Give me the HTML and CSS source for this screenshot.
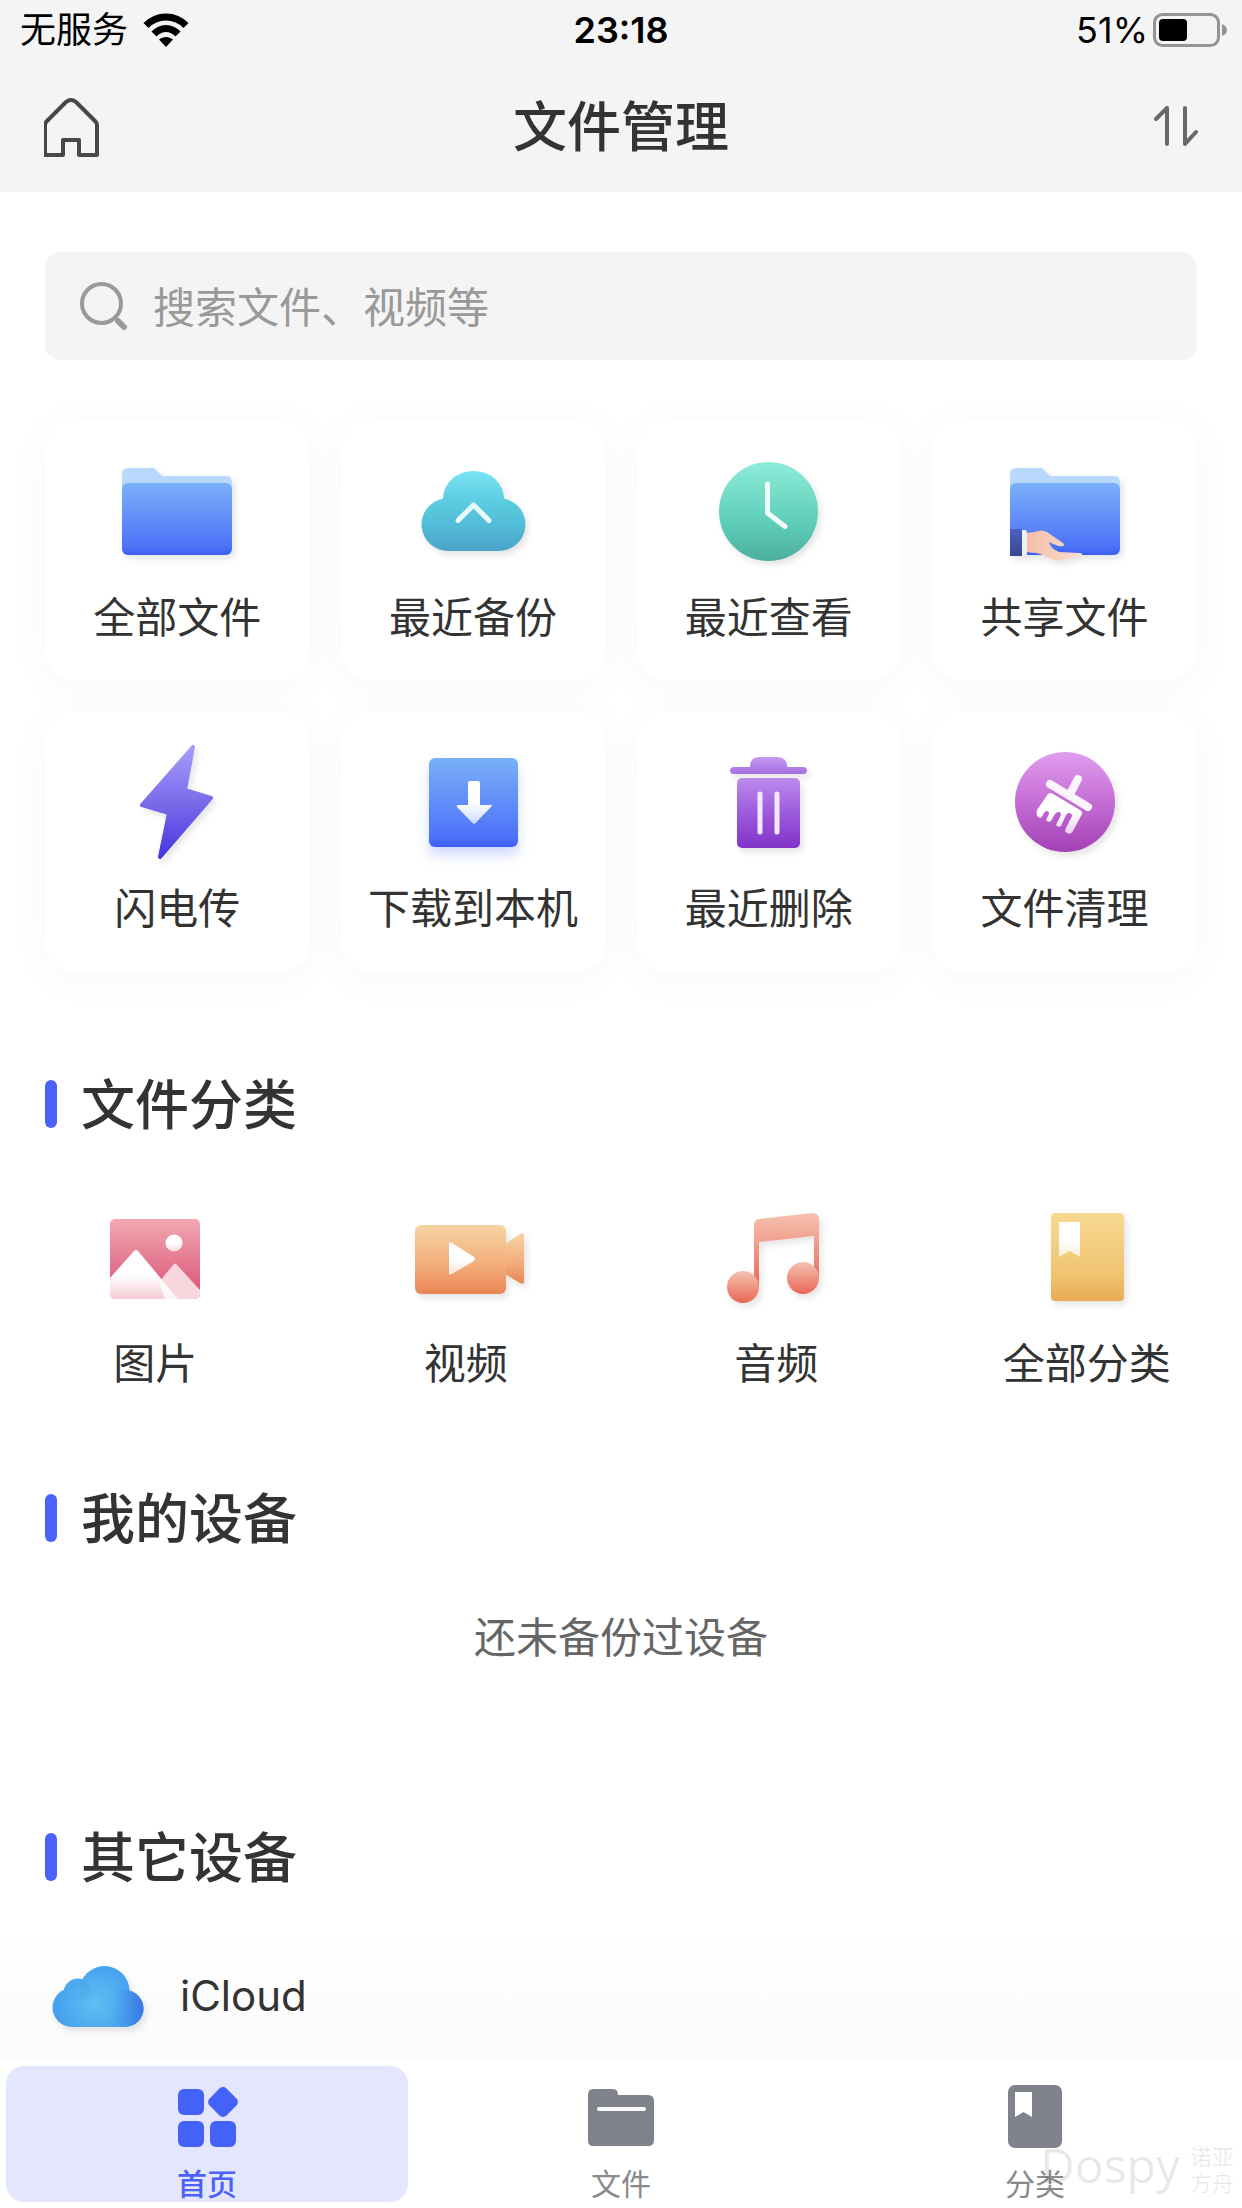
FILE: index.html
```html
<!DOCTYPE html>
<html lang="zh-CN">
<head>
<meta charset="utf-8">
<meta name="viewport" content="width=device-width">
<title>文件管理</title>
<link rel="stylesheet" href="styles.css">
</head>
<body>
<svg class="defs" aria-hidden="true">
  <defs>
    <linearGradient id="blue" x2="0" y2="1"><stop stop-color="#7ab0f9"/><stop offset=".88" stop-color="#4d73f8"/><stop offset="1" stop-color="#3d5ef6"/></linearGradient>
    <linearGradient id="cyan" x2="0" y2="1"><stop stop-color="#7be4f4"/><stop offset=".35" stop-color="#5dcee2"/><stop offset=".7" stop-color="#51bbd5"/><stop offset="1" stop-color="#4ba3cb"/></linearGradient>
    <linearGradient id="green" x2="0" y2="1"><stop stop-color="#8eecd9"/><stop offset=".6" stop-color="#5fcfba"/><stop offset="1" stop-color="#4dae9f"/></linearGradient>
    <linearGradient id="violet" x2="0" y2="1"><stop stop-color="#a79df9"/><stop offset=".5" stop-color="#7b6bea"/><stop offset="1" stop-color="#4736e2"/></linearGradient>
    <linearGradient id="purple" x2="0" y2="1"><stop stop-color="#bd8bec"/><stop offset=".5" stop-color="#9c5adc"/><stop offset="1" stop-color="#8233c8"/></linearGradient>
    <linearGradient id="lid" x2="0" y2="1"><stop stop-color="#c29af0"/><stop offset="1" stop-color="#a56fe4"/></linearGradient>
    <linearGradient id="orchid" x2="0" y2="1"><stop stop-color="#e29df0"/><stop offset=".5" stop-color="#c46dd4"/><stop offset="1" stop-color="#a340b5"/></linearGradient>
    <linearGradient id="pink" x2="0" y2="1"><stop stop-color="#f2a8b4"/><stop offset="1" stop-color="#d9506f"/></linearGradient>
    <linearGradient id="orange" x2="0" y2="1"><stop stop-color="#f7d3a4"/><stop offset=".6" stop-color="#f2ac79"/><stop offset="1" stop-color="#ea8552"/></linearGradient>
    <linearGradient id="coral" x2="0" y2="1"><stop stop-color="#f5c2b0"/><stop offset="1" stop-color="#ea6656"/></linearGradient>
    <linearGradient id="gold" x2="0" y2="1"><stop stop-color="#f8d992"/><stop offset=".7" stop-color="#efc471"/><stop offset="1" stop-color="#e8aa54"/></linearGradient>
    <linearGradient id="skin" x2="1" y2="0"><stop stop-color="#f3bea6"/><stop offset="1" stop-color="#f8ddd2"/></linearGradient>
    <linearGradient id="fade" x2="0" y2="1"><stop offset=".5" stop-color="#fff"/><stop offset="1" stop-color="#fff" stop-opacity=".7"/></linearGradient>
    <linearGradient id="sleeve" x2="0" y2="1"><stop stop-color="#4b63c0"/><stop offset="1" stop-color="#3a4590"/></linearGradient>
    <radialGradient id="sky" gradientUnits="userSpaceOnUse" cx="50" cy="60" r="46"><stop stop-color="#5dc0f2"/><stop offset="1" stop-color="#439cee"/></radialGradient>
    <linearGradient id="skyr" x2="1" y2="0"><stop offset=".1" stop-color="#439cee" stop-opacity="0"/><stop offset="1" stop-color="#3b74e2"/></linearGradient>
  </defs>
</svg>

<header class="top">
  <div class="status">
    <div class="status-left">
      <span>无服务</span>
      <svg class="wifi" viewBox="0 0 46 34" aria-hidden="true"><g fill="none" stroke="#000" stroke-width="7"><path d="M3 12.500C14 1 32 1 43 12.500"/><path d="M11 21C18 13.500 28 13.500 35 21"/></g><path d="M23 34l-7-7.500c4-3.500 10-3.500 14 0z"/></svg>
    </div>
    <strong class="clock">23:18</strong>
    <div class="status-right">
      <span>51%</span>
      <svg class="battery" viewBox="0 0 74 34" aria-hidden="true"><rect x="1.500" y="1.500" width="64" height="31" rx="8" fill="none" stroke="#949494" stroke-width="3"/><rect x="6" y="6" width="28" height="22" rx="4"/><path d="M69 11q5 2 5 6t-5 6z" fill="#949494"/></svg>
    </div>
  </div>
  <div class="titlebar">
    <button class="icon-button" aria-label="主页"><svg width="56" height="60" viewBox="1 0 56 60"><path d="M23 4q5-4 10 0l19 19q2 2 2 4v30H36V42H20v15H2V27q0-2 2-4z" fill="none" stroke="#484848" stroke-width="4" stroke-linejoin="round"/></svg></button>
    <h1>文件管理</h1>
    <button class="icon-button" aria-label="排序"><svg width="44" height="44" viewBox="0 0 44 44" fill="none" stroke="#696969" stroke-width="4" stroke-linecap="round" stroke-linejoin="round"><path d="M2 13L13 2v36M31 2v36l11-12"/></svg></button>
  </div>
</header>

<main>
  <label class="search">
    <svg width="50" height="50" viewBox="0 0 50 50" fill="none" stroke="#999" aria-hidden="true"><circle cx="21.500" cy="22.500" r="19.500" stroke-width="4"/><path d="M38 40l6 6" stroke-width="6" stroke-linecap="round"/></svg>
    <input type="search" placeholder="搜索文件、视频等" aria-label="搜索文件、视频等">
  </label>

  <nav class="cards" aria-label="功能">
    <a class="card" href="#all">
      <svg class="icon" viewBox="0 0 120 120"><path d="M5 40V22q0-6 6-6h26l8 8h64q6 0 6 6v12z" fill="#b8d9fb"/><rect x="5" y="31" width="110" height="72" rx="6" fill="url(#blue)"/></svg>
      <span>全部文件</span>
    </a>
    <a class="card" href="#backup">
      <svg class="icon" viewBox="0 0 120 120"><path d="M36 99A26.500 26.500 0 0 1 30 46.500A30.500 27.500 0 0 1 91 46.500A26.500 26.500 0 0 1 85 99z" fill="url(#cyan)"/><path d="M45 68.500L60.500 53L76 68.500" fill="none" stroke="#e9fafd" stroke-width="5" stroke-linecap="round" stroke-linejoin="round"/></svg>
      <span>最近备份</span>
    </a>
    <a class="card" href="#recent">
      <svg class="icon" viewBox="0 0 120 120"><circle cx="59.500" cy="59.500" r="49.500" fill="url(#green)"/><path d="M58.500 32v29l17.500 13.500" fill="none" stroke="#f2fcfb" stroke-width="5" stroke-linecap="round" stroke-linejoin="round"/></svg>
      <span>最近查看</span>
    </a>
    <a class="card" href="#shared">
      <svg class="icon" viewBox="0 0 120 120"><path d="M5 40V22q0-6 6-6h26l8 8h64q6 0 6 6v12z" fill="#b8d9fb"/><rect x="5" y="31" width="110" height="72" rx="6" fill="url(#blue)"/><path d="M21 81l9-1q6-3 12 0l16 11q2 2 0 3-5 1-14-4 1 6 10 10l21 1q4 1 1 3l-20 4q-5 1-10-1-13-7-16-6l-9-1z" fill="url(#skin)"/><path d="M5 77h12v27H5z" fill="url(#sleeve)"/><path d="M17 78h3q2 0 2 3v20q0 3-2 3h-3z" fill="#eceef8"/></svg>
      <span>共享文件</span>
    </a>
    <a class="card" href="#flash">
      <svg class="icon" viewBox="0 0 120 120"><path d="M76 4L68 47L94 55L43 114L52 70L25 62z" fill="url(#violet)" stroke="url(#violet)" stroke-width="4" stroke-linejoin="round"/></svg>
      <span>闪电传</span>
    </a>
    <a class="card" href="#download">
      <svg class="icon icon-glow" viewBox="0 0 120 120"><rect x="16" y="15" width="89" height="89" rx="6" fill="url(#blue)"/><path d="M57 38h8q2 0 2 2v22h11q2 0 0 2L62.500 80q-1.500 1.500-3 0L44 64q-1-2 1-2h10V40q0-2 2-2z" fill="url(#fade)"/></svg>
      <span>下载到本机</span>
    </a>
    <a class="card" href="#deleted">
      <svg class="icon" viewBox="0 0 120 120"><path d="M25 24h16q0-10 9-10h18q10 0 10 10h16q4 0 4 3.500t-4 3.500H25q-4 0-4-3.500t4-3.500z" fill="url(#lid)"/><rect x="28" y="35" width="63" height="70" rx="5" fill="url(#purple)"/><path d="M51 51v38M68 51v38" stroke="#f3e8fb" stroke-width="5" stroke-linecap="round"/></svg>
      <span>最近删除</span>
    </a>
    <a class="card" href="#clean">
      <svg class="icon" viewBox="0 0 120 120"><circle cx="60" cy="59" r="50" fill="url(#orchid)"/><g stroke="#fbf3fd" stroke-width="8" stroke-linecap="round"><path d="M73 36l-8 15" /><path d="M45 41l38 23"/></g><path d="M43 51q2-2 5 0l27 16q3 2 2 4l-9 17q-2 4-6 2-3-1-1-5l6-12q0-3-3-3-2 0-3 2l-5 11q-3 2-5-1l5-10q0-3-2-3-3 0-4 2l-4 7q-3 2-5-1l3-6q0-3-2-3-2 0-3 2l-3 5q-6-1-4-8z" fill="url(#fade)"/></svg>
      <span>文件清理</span>
    </a>
  </nav>

  <section class="categories-section">
    <h2>文件分类</h2>
    <nav class="categories" aria-label="文件分类">
      <a href="#image"><svg class="icon icon-flat" viewBox="0 0 120 120"><rect x="15" y="21" width="90" height="80" rx="5" fill="url(#pink)"/><circle cx="79" cy="45" r="8.500" fill="url(#fade)"/><path d="M64 84l14-17q2-3 4 0l23 25v4q0 5-5 5H70z" fill="#f8d6dd"/><path d="M15 80l24-27q2-2 4 0l40 48H20q-5 0-5-5z" fill="url(#fade)"/></svg><span>图片</span></a>
      <a href="#video"><svg class="icon" viewBox="0 0 120 120"><path d="M99 46l15-10q4-2 4 1v47q0 3-4 1l-15-9z" fill="url(#orange)"/><rect x="9" y="27" width="91" height="69" rx="6" fill="url(#orange)"/><path d="M43 46q0-3 3-1l22 14q2 2 0 4L46 76q-3 2-3-1z" fill="url(#fade)"/></svg><span>视频</span></a>
      <a href="#audio"><svg class="icon" viewBox="0 0 120 120"><path d="M38 90V27q0-5 5-6l53-6q7 0 7 6v60h-5V38l-55 6v46z" fill="url(#coral)"/><circle cx="27" cy="89" r="16" fill="url(#coral)"/><circle cx="87" cy="80" r="16" fill="url(#coral)"/></svg><span>音频</span></a>
      <a href="#categories"><svg class="icon" viewBox="0 0 120 120"><rect x="24" y="15" width="73" height="88" rx="4" fill="url(#gold)"/><path d="M32 24h21v35l-10.500-6L32 59z" fill="url(#fade)"/></svg><span>全部分类</span></a>
    </nav>
  </section>

  <section class="devices-section">
    <h2>我的设备</h2>
    <p class="empty">还未备份过设备</p>
  </section>

  <section class="other-section">
    <h2>其它设备</h2>
    <a class="device" href="#icloud">
      <svg class="icon device-icon" viewBox="0 0 105 105"><g fill="url(#sky)"><circle cx="27" cy="64.500" r="19.500"/><circle cx="33" cy="50" r="14.500"/><circle cx="59.500" cy="48" r="25"/><circle cx="80" cy="65.500" r="18.500"/><path d="M27 50h53v34H27z"/></g><circle cx="80" cy="65.500" r="18.500" fill="url(#skyr)"/><path d="M37 36q-3 8-1 24l11-8q-2-12-10-16z" fill="#3f8fe0" opacity=".15"/></svg>
      <span>iCloud</span>
    </a>
  </section>
</main>

<nav class="tabs" aria-label="主导航">
  <a class="tab active" href="#home" aria-current="page">
    <svg width="64" height="64" viewBox="0 0 64 64" fill="#4461f8"><rect x="3" y="5" width="26" height="26" rx="6"/><rect x="3" y="37" width="26" height="26" rx="6"/><rect x="35" y="37" width="26" height="26" rx="6"/><rect x="36" y="6" width="24" height="24" rx="5" transform="rotate(45 48 18)"/></svg>
    <span>首页</span>
  </a>
  <a class="tab" href="#files">
    <svg width="66" height="64" viewBox="0 0 66 64"><path d="M5 5h20q5 0 5 6h30q6 0 6 6v39q0 6-6 6H5q-5 0-5-6V11q0-6 5-6z" fill="#80838c"/><path d="M11 25h45" stroke="#fff" stroke-width="4" stroke-linecap="round"/></svg>
    <span>文件</span>
  </a>
  <a class="tab" href="#category">
    <svg width="54" height="64" viewBox="0 0 54 64"><rect y="1" width="54" height="63" rx="7" fill="#80838c"/><path d="M7 8h17v25l-8.500-5L7 33z" fill="#fff"/></svg>
    <span>分类</span>
  </a>
  <div class="watermark" aria-hidden="true"><span class="mark-name">Dospy</span><span class="mark-sub">诺亚<br>方舟</span></div>
</nav>
</body>
</html>
```
FILE: styles.css
```css
* { box-sizing: border-box; margin: 0; }

body {
  display: flex;
  flex-direction: column;
  min-height: 100vh;
  background: #fff;
  color: #333;
  font-family: Inter, "Noto Sans CJK SC", sans-serif;
  font-size: 42px;
  line-height: 60px;
}

a { color: inherit; text-decoration: none; }
svg { display: block; flex: none; }
.defs { position: absolute; width: 0; height: 0; }

.top { background: #f4f4f4; }

.status, .titlebar {
  display: grid;
  grid-template-columns: 1fr auto 1fr;
  align-items: center;
}
.status {
  height: 60px;
  padding: 0 15px;
  color: #000;
  font-size: 36px;
}
.status-left, .status-right { display: flex; align-items: center; }
.status-left { gap: 15px; padding-left: 5px; }
.status-right { justify-content: flex-end; gap: 5px; }
.clock { font-weight: 600; }
.wifi { width: 46px; height: 34px; }
.battery { width: 74px; height: 34px; }

.titlebar {
  height: 132px;
  padding: 4px 44px 0;
}
.icon-button { padding: 0; border: 0; background: none; }
.icon-button:first-child { justify-self: start; }
.icon-button:last-child { justify-self: end; }

h1, h2 { font-size: 54px; font-weight: 500; line-height: 60px; }

main { flex: 1; }

.search {
  display: flex;
  align-items: center;
  gap: 23px;
  height: 108px;
  margin: 60px 45px;
  padding: 0 35px;
  border-radius: 15px;
  background: #f4f4f4;
}
.search input {
  flex: 1;
  min-width: 0;
  padding: 4px 0 0;
  border: 0;
  outline: 0;
  background: none;
  color: #333;
  font: inherit;
}
.search input::placeholder { color: #999; opacity: 1; }

.cards {
  display: grid;
  grid-template-columns: repeat(4, 1fr);
  gap: 30px 31px;
  margin: 0 45px;
}
.card {
  display: flex;
  flex-direction: column;
  align-items: center;
  gap: 16px;
  padding: 32px 0 33px;
  border-radius: 30px;
  background: #fff;
  box-shadow: 0 6px 45px rgba(0, 0, 0, .035);
  white-space: nowrap;
}
.icon {
  width: 120px;
  height: 120px;
  filter: drop-shadow(3px 4px 3px rgba(0, 0, 0, .1));
}
.icon-glow { filter: drop-shadow(0 8px 6px rgba(70, 100, 248, .25)); }
.icon-flat { filter: none; }

h2 { display: flex; align-items: center; gap: 24px; margin: 0 45px; }
h2::before {
  content: "";
  width: 12px;
  height: 48px;
  margin-bottom: 4px;
  border-radius: 6px;
  background: #4a61fa;
}

.categories-section { margin-top: 104px; }
.categories {
  display: grid;
  grid-template-columns: repeat(4, 1fr);
  margin-top: 62px;
}
.categories a { display: flex; flex-direction: column; align-items: center; gap: 16px; }

.devices-section { margin-top: 96px; }
.empty { margin-top: 58px; color: #666; text-align: center; }

.other-section {
  margin-top: 161px;
  padding-bottom: 12px;
  background: linear-gradient(to top, #fafafa, #fff 130px);
}
.device { display: flex; align-items: center; gap: 30px; margin: 54px 45px 0; }
.device-icon { width: 105px; height: 105px; }

.tabs {
  position: sticky;
  bottom: 0;
  display: grid;
  grid-template-columns: repeat(3, 1fr);
  gap: 12px;
  padding: 6px;
  background: #fff;
  color: #8a8a8a;
  font-size: 30px;
  line-height: 36px;
}
.tab {
  display: flex;
  flex-direction: column;
  align-items: center;
  gap: 18px;
  padding-top: 18px;
  border-radius: 18px;
}
.tab.active { background: #e4e6fd; color: #4a61fa; font-weight: 500; }

.watermark {
  position: absolute;
  right: 8px;
  bottom: 6px;
  display: flex;
  align-items: center;
  gap: 10px;
  color: rgba(0, 0, 0, .09);
  pointer-events: none;
}
.mark-name { padding-bottom: 10px; font-family: "Open Sans", sans-serif; font-size: 48px; line-height: 54px; }
.mark-sub { font-size: 22px; line-height: 26px; }
```
